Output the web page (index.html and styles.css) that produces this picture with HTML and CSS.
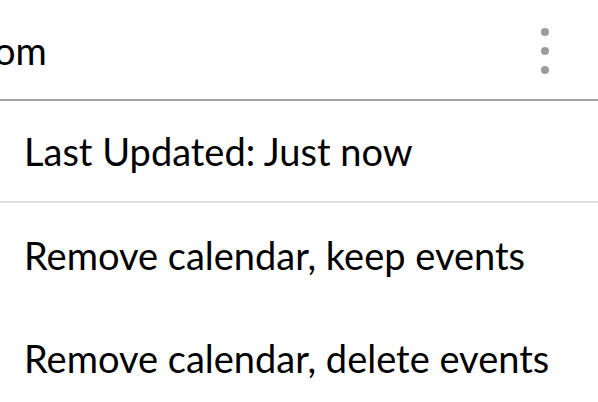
FILE: index.html
```html
<!DOCTYPE html>
<html>
<head>
<meta charset="utf-8">
<link rel="stylesheet" href="styles.css">
</head>
<body>
<div class="menu">
  <div class="header">
    <span class="account">om</span>
    <div class="kebab"><span class="dot"></span><span class="dot"></span><span class="dot"></span></div>
  </div>
  <div class="row status">Last Updated: Just now</div>
  <div class="row item">Remove calendar, keep events</div>
  <div class="row item">Remove calendar, delete events</div>
</div>
</body>
</html>
```
FILE: styles.css
```css
html, body {
  margin: 0;
  padding: 0;
  background: #fff;
}
body {
  font-family: "Lato", "Liberation Sans", sans-serif;
  color: #000;
  overflow: hidden;
}
.menu {
  width: 598px;
}
.header {
  height: 99px;
  border-bottom: 2px solid #a2a2a2;
  display: flex;
  align-items: center;
  justify-content: space-between;
  padding-right: 49px;
}
.account {
  font-size: 38px;
  margin-left: -6px;
  line-height: 1;
}
.kebab {
  display: flex;
  flex-direction: column;
  gap: 11px;
  margin-top: 2px;
}
.dot {
  width: 8px;
  height: 8px;
  border-radius: 50%;
  background: #9c9c9c;
}
.row {
  font-size: 38px;
  padding-left: 24px;
  display: flex;
  align-items: center;
}
.status {
  height: 100px;
  border-bottom: 2px solid #dedede;
}
.item {
  height: 103px;
}
```
